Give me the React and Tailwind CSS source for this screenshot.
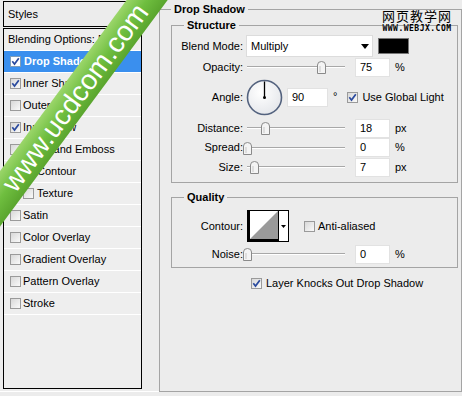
import React from 'react'

const LAYERS = [
  { name: 'Drop Shadow', checked: true, active: true },
  { name: 'Inner Shadow', checked: true },
  { name: 'Outer Glow', checked: false },
  { name: 'Inner Glow', checked: true },
  { name: 'Bevel and Emboss', checked: false },
  { name: 'Contour', checked: false, sub: true },
  { name: 'Texture', checked: false, sub: true },
  { name: 'Satin', checked: false },
  { name: 'Color Overlay', checked: false },
  { name: 'Gradient Overlay', checked: false },
  { name: 'Pattern Overlay', checked: false },
  { name: 'Stroke', checked: false },
]

function Check({ checked, light }) {
  return (
    <span
      className={
        light
          ? 'inline-flex w-[11px] h-[11px] shrink-0 items-center justify-center border border-[#7f9db9] bg-white'
          : 'inline-flex w-[11px] h-[11px] shrink-0 items-center justify-center border border-[#9a9a9a] bg-linear-to-br from-[#d8d8d8] to-[#fafafa]'
      }
    >
      {checked && (
        <svg width="9" height="9" viewBox="0 0 9 9">
          <path d="M1.3 4.3 L3.5 7 L7.8 1.2" fill="none" stroke="#2a4a9e" strokeWidth="1.7" />
        </svg>
      )}
    </span>
  )
}

function Slider({ thumb }) {
  return (
    <div className="relative w-[106px] h-[14px] shrink-0">
      <div className="absolute left-[4px] w-[98px] top-[6px] h-[2px] border-t border-[#a8a8a8] border-b border-b-white" />
      <svg className={`absolute top-[1px] ${thumb}`} width="9" height="13" viewBox="0 0 9 13">
        <path d="M0.5 12.5 V4 Q0.5 0.5 4.5 0.5 Q8.5 0.5 8.5 4 V12.5 Z" fill="#f4f4f4" stroke="#8a8a8a" />
        <line x1="3" y1="5" x2="3" y2="11" stroke="#c8c8c8" />
      </svg>
    </div>
  )
}

function Field({ value, w = 'w-[35px]' }) {
  return (
    <div className={`${w} h-[19px] shrink-0 bg-white border border-[#e2e2e2] pl-[4px] flex items-center`}>
      {value}
    </div>
  )
}

function Label({ children }) {
  return <div className="w-[71px] shrink-0 text-right">{children}</div>
}

export default function App() {
  return (
    <div className="relative w-[462px] h-[396px] overflow-hidden bg-[#ececec] text-[11px] leading-[13px] text-black font-['Tahoma','Liberation_Sans',sans-serif]">
      <div className="flex h-[392px] border-b border-white">
        {/* left: styles list */}
        <div className="w-[159px] shrink-0 pl-[3px] pt-[1px]">
          <div className="w-[139px] h-[26px] border border-black pl-[4px] flex items-center">Styles</div>
          <div className="w-[139px] h-[361px] mt-[1px] border border-black bg-[#eeeeee] overflow-hidden whitespace-nowrap">
            <div className="h-[22px] border-b border-white pl-[4px] flex items-center">Blending Options: Default</div>
            {LAYERS.map(l => (
              <div
                key={l.name}
                className={
                  l.active
                    ? 'h-[22px] border-b border-white bg-[#3a8fee] text-white font-bold pl-[6px] flex items-center gap-[3px]'
                    : l.sub
                      ? 'h-[22px] border-b border-white pl-[19px] flex items-center gap-[3px]'
                      : 'h-[22px] border-b border-white pl-[6px] flex items-center gap-[2px]'
                }
              >
                <Check checked={l.checked} light={l.active} />
                <span>{l.name}</span>
              </div>
            ))}
          </div>
        </div>

        {/* right: drop shadow settings */}
        <fieldset className="w-[320px] h-[389px] mt-[3px] border border-[#a4a4a4] pl-[11px] whitespace-nowrap">
          <legend className="px-[3px] font-bold">Drop Shadow</legend>

          <fieldset className="w-[287px] mt-[3px] border border-[#a4a4a4] pb-[5px]">
            <legend className="ml-[12px] px-[3px] font-bold">Structure</legend>
            <div className="pt-[3px]">
              <div className="h-[22px] flex items-center">
                <Label>Blend Mode:</Label>
                <div className="ml-[3px] w-[127px] h-[22px] bg-white border border-[#dcdcdc] pl-[4px] pr-[3px] flex items-center justify-between">
                  <span>Multiply</span>
                  <svg width="8" height="5" viewBox="0 0 8 5"><path d="M0 0 H8 L4 5 Z" fill="#000" /></svg>
                </div>
                <div className="ml-[5px] w-[31px] h-[16px] bg-black border border-[#777]" />
              </div>

              <div className="h-[20px] flex items-center">
                <Label>Opacity:</Label>
                <Slider thumb="left-[74px]" />
                <div className="ml-[6px]"><Field value="75" /></div>
                <span className="ml-[5px]">%</span>
              </div>

              <div className="h-[41px] flex items-center">
                <Label>Angle:</Label>
                <svg className="ml-[3px] shrink-0" width="37" height="37" viewBox="0 0 37 37">
                  <defs>
                    <radialGradient id="dial" cx="40%" cy="35%" r="70%">
                      <stop offset="0" stopColor="#ffffff" />
                      <stop offset="1" stopColor="#e4e6ea" />
                    </radialGradient>
                  </defs>
                  <circle cx="18.5" cy="18.5" r="17" fill="url(#dial)" stroke="#53627e" strokeWidth="1.6" />
                  <line x1="18.5" y1="18.5" x2="18.5" y2="2.5" stroke="#000" strokeWidth="1.3" />
                  <circle cx="18.5" cy="18.5" r="1.5" fill="#000" />
                </svg>
                <div className="ml-[4px]"><Field value="90" w="w-[41px]" /></div>
                <span className="ml-[5px] self-start mt-[13px]">°</span>
                <div className="ml-[10px] flex items-center gap-[4px]">
                  <Check checked />
                  <span>Use Global Light</span>
                </div>
              </div>

              <div className="h-[20px] flex items-center">
                <Label>Distance:</Label>
                <Slider thumb="left-[18px]" />
                <div className="ml-[6px]"><Field value="18" /></div>
                <span className="ml-[5px]">px</span>
              </div>

              <div className="h-[19px] flex items-center">
                <Label>Spread:</Label>
                <Slider thumb="left-[0px]" />
                <div className="ml-[6px]"><Field value="0" /></div>
                <span className="ml-[5px]">%</span>
              </div>

              <div className="h-[20px] flex items-center">
                <Label>Size:</Label>
                <Slider thumb="left-[7px]" />
                <div className="ml-[6px]"><Field value="7" /></div>
                <span className="ml-[5px]">px</span>
              </div>
            </div>
          </fieldset>

          <fieldset className="w-[287px] mt-[8px] border border-[#a4a4a4] pb-[3px]">
            <legend className="ml-[12px] px-[3px] font-bold">Quality</legend>
            <div className="pt-[6px]">
              <div className="h-[32px] flex items-center">
                <Label>Contour:</Label>
                <div className="ml-[4px] w-[42px] h-[32px] flex border border-black bg-white shrink-0">
                  <svg className="border-l-2 border-b-2 border-black" width="30" height="30" viewBox="0 0 28 28" preserveAspectRatio="none">
                    <rect width="28" height="28" fill="#ffffff" />
                    <path d="M0 28 L28 0 V28 Z" fill="#9a9a9a" />
                  </svg>
                  <div className="flex-1 border-l border-black flex items-center justify-center">
                    <svg width="5" height="3" viewBox="0 0 5 3"><path d="M0 0 H5 L2.5 3 Z" fill="#000" /></svg>
                  </div>
                </div>
                <div className="ml-[15px] flex items-center gap-[3px]">
                  <Check checked={false} />
                  <span>Anti-aliased</span>
                </div>
              </div>

              <div className="h-[20px] mt-[2px] flex items-center">
                <Label>Noise:</Label>
                <Slider thumb="left-[0px]" />
                <div className="ml-[6px]"><Field value="0" /></div>
                <span className="ml-[5px]">%</span>
              </div>
            </div>
          </fieldset>

          <div className="h-[20px] mt-[5px] pl-[80px] flex items-center gap-[4px]">
            <Check checked />
            <span>Layer Knocks Out Drop Shadow</span>
          </div>
        </fieldset>
      </div>

      {/* site watermark, top right */}
      <div className="absolute left-[382px] top-[8px] flex flex-col items-center">
        <span className="text-[13px] leading-[15px] tracking-[1px] font-['Noto_Sans_CJK_SC',sans-serif]">网页教学网</span>
        <span className="mt-[2px] text-[8px] leading-[8px] font-bold tracking-[0.5px] font-['DejaVu_Sans_Mono',monospace]">WWW.WEBJX.COM</span>
      </div>

      {/* green ribbon watermark */}
      <div className="absolute left-[-125px] top-[81px] w-[400px] h-[33px] rotate-[-53.5deg] bg-linear-to-b from-[#9bd66a] via-[#6fbe3f] to-[#5aa52e] flex items-center justify-center">
        <span className="text-white text-[28px] leading-[30px] font-['Liberation_Sans',sans-serif]">www.ucdcom.com</span>
      </div>
    </div>
  )
}
